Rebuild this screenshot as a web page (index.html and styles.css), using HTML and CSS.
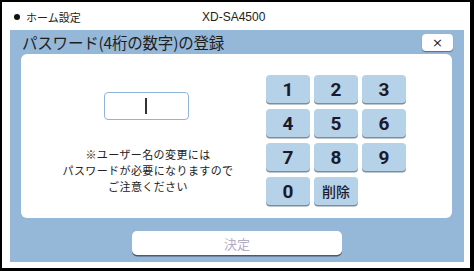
FILE: index.html
```html
<!DOCTYPE html>
<html lang="ja">
<head>
<meta charset="utf-8">
<link rel="stylesheet" href="styles.css">
</head>
<body>
<div class="frame">
  <div class="header">
    <span class="crumb"><span class="dot"></span>ホーム設定</span>
    <span class="model">XD-SA4500</span>
  </div>
  <div class="dialog">
    <div class="titlebar">
      <span class="title">パスワード(4桁の数字)の登録</span>
      <button class="close">×</button>
    </div>
    <div class="panel">
      <div class="left">
        <div class="input"><span class="caret"></span></div>
        <p class="note">※ユーザー名の変更には<br>パスワードが必要になりますので<br>ご注意ください</p>
      </div>
      <div class="keypad">
        <button class="key">1</button>
        <button class="key">2</button>
        <button class="key">3</button>
        <button class="key">4</button>
        <button class="key">5</button>
        <button class="key">6</button>
        <button class="key">7</button>
        <button class="key">8</button>
        <button class="key">9</button>
        <button class="key">0</button>
        <button class="key del">削除</button>
      </div>
    </div>
    <div class="footer">
      <button class="decide">決定</button>
    </div>
  </div>
</div>
</body>
</html>
```
FILE: styles.css
```css
* { box-sizing: border-box; }
html, body { margin: 0; padding: 0; background: #fff; }
body { font-family: "Noto Sans CJK JP", "Noto Sans", sans-serif; color: #222; }
.frame {
  width: 474px; height: 271px;
  border-style: solid; border-color: #000;
  border-width: 2px 4px 3px 2px;
  background: #fff;
  display: flex; flex-direction: column;
}
.header {
  height: 28px; flex: none;
  display: flex; align-items: center;
  padding-left: 12px; padding-top: 1px;
  font-size: 11px; color: #222;
}
.crumb { display: flex; align-items: center; width: 188px; }
.dot { width: 6px; height: 6px; border-radius: 50%; background: #111; margin-right: 6px; }
.model { font-family: "Liberation Sans", Arial, sans-serif; font-size: 12px; color: #222; }
.dialog {
  flex: none;
  margin: 0 6px 0 8px;
  height: 232px;
  background: #95b7d8;
  display: flex; flex-direction: column;
}
.titlebar {
  height: 24px; flex: none;
  display: flex; align-items: center; justify-content: space-between;
  padding: 0 11px 0 12px;
}
.title { font-size: 15.5px; color: #1e1e1e; letter-spacing: -0.2px; }
.close {
  width: 31px; height: 17px; padding: 0;
  border: none; border-radius: 4px;
  background: #fff; box-shadow: 0 1px 1px #5b6b7c;
  font-family: "DejaVu Sans", sans-serif; font-size: 13px; line-height: 17px; color: #222;
}
.panel {
  flex: none; height: 164px;
  margin: 0 12px 0 11px;
  background: #fff; border-radius: 6px;
  display: grid; grid-template-columns: 245px auto;
}
.left { padding: 38px 0 0 5px; display: flex; flex-direction: column; align-items: center; }
.input {
  width: 85px; height: 28px;
  border: 1.5px solid #8fb4da; border-radius: 4px;
  display: flex; align-items: center; justify-content: center;
}
.caret { width: 1.5px; height: 16px; background: #333; }
.note {
  margin: 26px 0 0; padding-left: 4px;
  font-size: 11px; line-height: 16px; text-align: center; color: #222;
  letter-spacing: 0.4px;
}
.keypad {
  padding-top: 21px;
  display: grid; grid-template-columns: repeat(3, 44px);
  grid-auto-rows: 28px; column-gap: 4px; row-gap: 6px;
}
.key {
  border: none; padding: 0; border-radius: 4px;
  background: #b6d2e8; box-shadow: 0 1.5px 0 #7f8d9b;
  font-family: Roboto, "Noto Sans", sans-serif; font-weight: 700; font-size: 19px; color: #1a1a2c;
}
.key.del { font-family: "Noto Sans CJK JP", sans-serif; font-size: 14px; font-weight: 500; }
.footer { flex: none; display: flex; justify-content: center; padding-top: 13px; }
.decide {
  width: 210px; height: 24px; padding: 0;
  border: none; border-radius: 5px;
  background: #fff; box-shadow: 0 1.5px 0 #4d5a70;
  font-family: "Noto Sans CJK JP", sans-serif; font-size: 13px; color: #b4aec4;
}
```
